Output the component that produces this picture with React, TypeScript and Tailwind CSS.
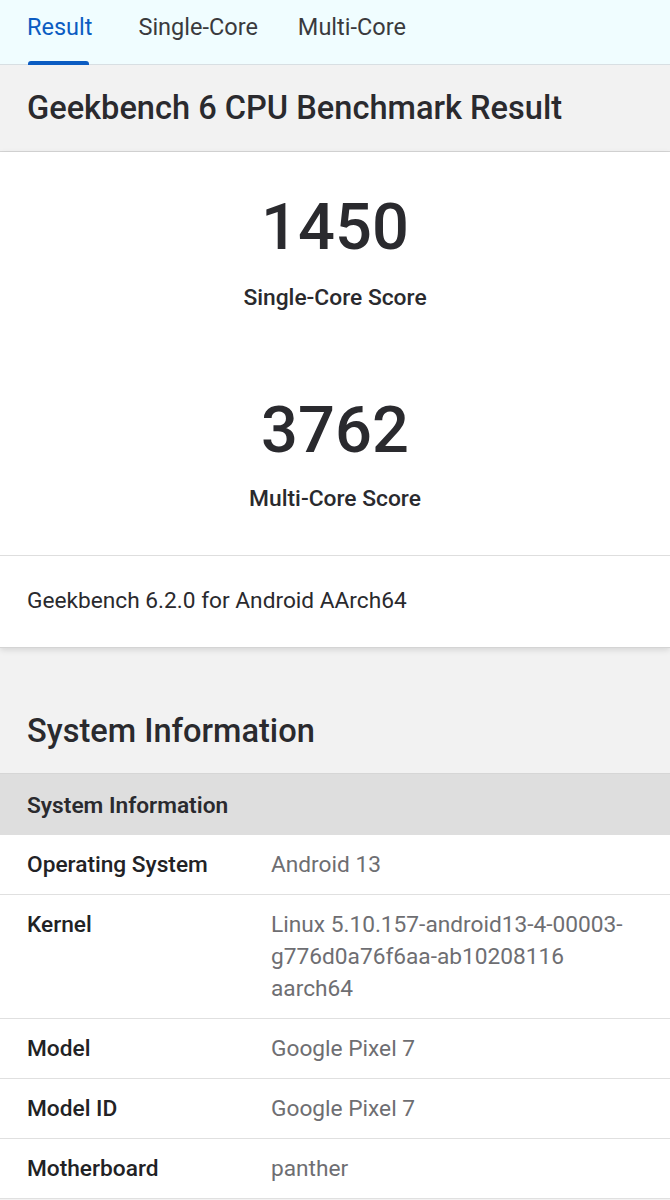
import React from "react";

const rows: { label: string; value: string }[] = [
  { label: "Operating System", value: "Android 13" },
  { label: "Kernel", value: "Linux 5.10.157-android13-4-00003-g776d0a76f6aa-ab10208116 aarch64" },
  { label: "Model", value: "Google Pixel 7" },
  { label: "Model ID", value: "Google Pixel 7" },
  { label: "Motherboard", value: "panther" },
];

export default function App() {
  return (
    <div className="font-['Roboto','Noto_Sans',sans-serif] bg-[#f2f2f2] min-h-[1200px] w-[670px] text-[#2b2b2e]">
      <nav className="h-[65px] bg-[#f0fdff] border-b border-[#d8dfe3] flex items-stretch pl-[27px]">
        <div className="relative flex items-center">
          <span className="text-[23.5px] text-[#0b5cc2] leading-none -mt-[9px]">Result</span>
          <span className="absolute left-[1px] right-[3px] bottom-[-1px] h-[4px] bg-[#0b5cc2] rounded-t-[3px]"></span>
        </div>
        <div className="flex items-center ml-[46px]">
          <span className="text-[23.5px] text-[#3a3a3d] leading-none -mt-[9px]">Single-Core</span>
        </div>
        <div className="flex items-center ml-[40px]">
          <span className="text-[23.5px] text-[#3a3a3d] leading-none -mt-[9px]">Multi-Core</span>
        </div>
      </nav>

      <header className="h-[87px] bg-[#f2f2f2] border-b border-[#d6d6d6] flex items-center px-[27px]">
        <h1 className="text-[32.6px] font-medium leading-none text-[#2a2a2e]">Geekbench 6 CPU Benchmark Result</h1>
      </header>

      <div className="bg-white shadow-[0_2px_6px_rgba(0,0,0,0.12)]">
        <div className="pt-[35px] pb-[40px] flex flex-col items-center border-b border-[#dedede]">
          <div className="h-[80px] flex items-center text-[65px] font-medium leading-none text-[#2a2a2e]">1450</div>
          <div className="mt-[15px] h-[32px] flex items-center text-[22.8px] font-medium text-[#2a2a2e]">Single-Core Score</div>
          <div className="mt-[76px] h-[80px] flex items-center text-[65px] font-medium leading-none text-[#2a2a2e]">3762</div>
          <div className="mt-[13px] h-[32px] flex items-center text-[22.8px] font-medium text-[#2a2a2e]">Multi-Core Score</div>
        </div>
        <div className="h-[92px] flex items-center px-[27px] text-[22.7px] text-[#2a2a2e] border-b border-[#d4d4d4]">
          Geekbench 6.2.0 for Android AArch64
        </div>
      </div>

      <div className="h-[126px] flex items-end px-[27px] pb-[25px] border-b border-[#d6d6d6]">
        <h2 className="text-[32.6px] font-medium leading-[34px] text-[#2a2a2e]">System Information</h2>
      </div>

      <div className="bg-white">
        <div className="h-[61px] bg-[#dedede] flex items-center px-[27px] pt-[3px] text-[22.7px] font-semibold text-[#2a2a2e]">
          System Information
        </div>
        {rows.map((r) => (
          <div key={r.label} className="flex px-[27px] pt-[14px] pb-[13px] border-b border-[#e0e0e0] text-[22.7px] leading-[32px]">
            <div className="w-[244px] shrink-0 font-medium text-[#222225]">{r.label}</div>
            <div className="flex-1 text-[#6e6e72] break-words">{r.value}</div>
          </div>
        ))}
      </div>
    </div>
  );
}
